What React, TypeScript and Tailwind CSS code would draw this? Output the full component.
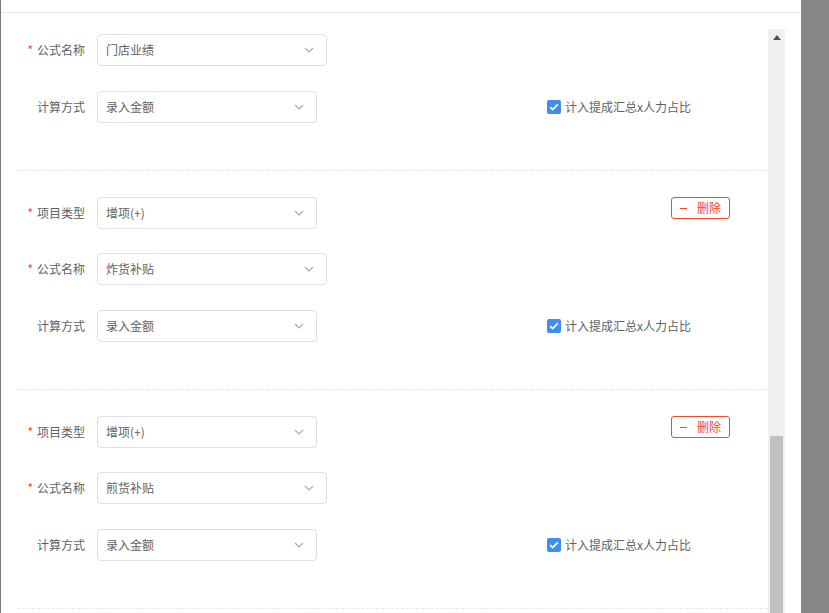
import React from "react";

const font = { fontFamily: '"Noto Sans CJK SC", "Noto Sans", sans-serif' };

function Chevron() {
  return (
    <svg width="10" height="6" viewBox="0 0 10 6" fill="none" className="shrink-0">
      <path d="M1 1l4 4 4-4" stroke="#a8abb2" strokeWidth="1.2" />
    </svg>
  );
}

function Select({ value, wide }: { value: string; wide?: boolean }) {
  return (
    <div
      className={`h-[32px] ${wide ? "w-[230px]" : "w-[220px]"} border border-[#dcdfe6] rounded-[4px] flex items-center justify-between pl-[8px] pr-[12px] text-[12px] text-[#606266] bg-white`}
    >
      <span>{value}</span>
      <Chevron />
    </div>
  );
}

function Label({ text, required }: { text: string; required?: boolean }) {
  return (
    <div className="w-[68px] mr-[12px] flex items-center justify-end text-[12px] text-[#606266] shrink-0">
      {required && <span className="text-[#f04b24] mr-[4px] text-[12px]">*</span>}
      <span>{text}</span>
    </div>
  );
}

function Checkbox() {
  return (
    <div className="flex items-center gap-[4px] text-[12px] text-[#606266]">
      <div className="w-[14px] h-[14px] rounded-[2px] bg-[#3d8ef0] flex items-center justify-center">
        <svg width="10" height="8" viewBox="0 0 10 8" fill="none">
          <path d="M1.2 4.2l2.5 2.4L8.8 1.4" stroke="#fff" strokeWidth="1.8" />
        </svg>
      </div>
      <span>计入提成汇总x人力占比</span>
    </div>
  );
}

function DeleteButton() {
  return (
    <div className="h-[22px] w-[59px] border border-[#f04b24] rounded-[3px] flex items-center justify-center gap-[10px] text-[12px] text-[#f04b24]">
      <span className="inline-block w-[7px] h-px bg-[#f04b24]" />
      <span>删除</span>
    </div>
  );
}

function Section({ type, formula, first }: { type?: string; formula: string; first?: boolean }) {
  return (
    <div className={`${first ? "pt-[21px]" : "pt-[26px] border-t border-dashed border-[#e4e7ed]"} pb-[47px]`}>
      {type && (
        <div className="flex items-center mb-[24px]">
          <Label text="项目类型" required />
          <Select value={type} />
          <div className="ml-[354px] self-start">
            <DeleteButton />
          </div>
        </div>
      )}
      <div className="flex items-center mb-[25px]">
        <Label text="公式名称" required />
        <Select value={formula} wide />
      </div>
      <div className="flex items-center">
        <Label text="计算方式" />
        <Select value="录入金额" />
        <div className="ml-[230px]">
          <Checkbox />
        </div>
      </div>
    </div>
  );
}

export default function App() {
  return (
    <div className="w-[829px] h-[613px] flex bg-[#878787] overflow-hidden" style={font}>
      <div className="w-[801px] h-full bg-white border-l border-[#7a7a7a] flex flex-col">
        <div className="h-[13px] border-b border-[#e8e8e8] shrink-0" />
        <div className="flex-1 flex min-h-0">
          <div className="flex-1 pl-[16px] overflow-hidden">
            <Section formula="门店业绩" first />
            <Section type="增项(+)" formula="炸货补贴" />
            <Section type="增项(+)" formula="煎货补贴" />
            <div className="border-t border-dashed border-[#e4e7ed]" />
          </div>
          <div className="w-[17px] mt-[16px] bg-[#f0f0f0] flex flex-col shrink-0">
            <div className="h-[17px] flex items-center justify-center shrink-0">
              <svg width="8" height="5" viewBox="0 0 8 5">
                <path d="M0 5L4 0l4 5z" fill="#505050" />
              </svg>
            </div>
            <div className="flex-1" />
            <div className="h-[177px] mx-[2px] bg-[#c1c1c1] shrink-0" />
          </div>
          <div className="w-[16px] shrink-0" />
        </div>
      </div>
    </div>
  );
}
